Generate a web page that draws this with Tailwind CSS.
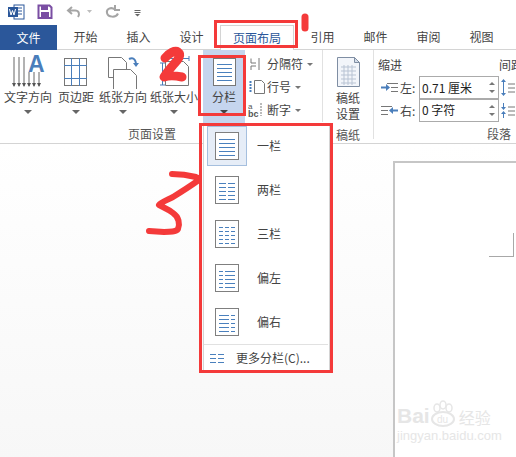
<!DOCTYPE html>
<html lang="zh">
<head>
<meta charset="utf-8">
<script src="https://cdn.jsdelivr.net/npm/@tailwindcss/browser@4"></script>
</head>
<body class="m-0 bg-white">
<div class="relative w-[516px] h-[457px] overflow-hidden flex flex-col text-[12px] leading-[16px] text-[#444] font-['Noto_Sans_CJK_SC','Microsoft_YaHei',sans-serif]">

  <!-- Title bar -->
  <div class="h-[25px] flex items-center shrink-0 relative">
    <svg class="absolute left-0 top-0" width="150" height="25" viewBox="0 0 150 25">
      <rect x="14" y="5" width="10" height="14" fill="#fff" stroke="#2b579a"/>
      <path d="M17 8h5M17 11h5M17 14h5" stroke="#2b579a"/>
      <rect x="8" y="7" width="10" height="10" fill="#2b579a"/>
      <path d="M9.500 9l1.500 6 1.500-4.500 1.500 4.500 1.500-6" stroke="#fff" stroke-width="1" fill="none"/>
      <path d="M38.500 5.500h11l2 2v10.500h-13z" fill="#fff" stroke="#7a4ea3" stroke-width="2"/>
      <rect x="41" y="6" width="7" height="4" fill="#7a4ea3"/>
      <rect x="41" y="12" width="8" height="6" fill="#7a4ea3"/>
      <path d="M72 7l-4 3.500 4 3.500M68.500 10.500h6.500c4 0 5 3.500 3 6.500" stroke="#a5a5a5" stroke-width="2" fill="none"/>
      <path d="M87 10h5l-2.500 3z" fill="#bdbdbd"/>
      <path d="M115 9.500c-4-3-9-.5-8 3.500 1 4.500 9 5 11 .5M115 5v5h5" stroke="#a5a5a5" stroke-width="2" fill="none"/>
      <path d="M134.500 10.500h6M134.500 12.500h6" stroke="#666"/>
      <path d="M135 14h5l-2.500 2.500z" fill="#666"/>
    </svg>
  </div>

  <!-- Tabs -->
  <div class="h-[25px] flex items-stretch shrink-0 border-b border-[#d4d4d4]">
    <div class="w-[57px] h-[25px] bg-[#2b579a] text-white flex items-center justify-center">文件</div>
    <div class="w-[53px] ml-[2px] flex items-center justify-center">开始</div>
    <div class="w-[53px] flex items-center justify-center">插入</div>
    <div class="w-[53px] flex items-center justify-center">设计</div>
    <div class="w-[74px] ml-[2px] h-[25px] bg-white border border-b-0 border-[#d4d4d4] text-[#2b579a] flex items-center justify-center whitespace-nowrap">页面布局</div>
    <div class="w-[53px] ml-[2px] flex items-center justify-center">引用</div>
    <div class="w-[53px] flex items-center justify-center">邮件</div>
    <div class="w-[53px] flex items-center justify-center">审阅</div>
    <div class="w-[53px] flex items-center justify-center">视图</div>
  </div>

  <!-- Ribbon -->
  <div class="h-[94px] flex shrink-0 border-b border-[#d4d4d4] bg-white">
    <!-- 页面设置 -->
    <div class="w-[323px] flex flex-col border-r border-[#e1e1e1] mb-[21px] relative">
      <div class="flex h-[73px] pl-[4px]">
        <div class="w-[48px] flex flex-col items-center">
          <svg class="shrink-0" width="48" height="39" viewBox="0 0 48 39">
            <path d="M10 7v29M15 7v29M20 7v29M25 22v14M30 22v14M35 22v14" stroke="#666" fill="none"/>
            <path d="M8 33l2 4 2-4zM13 33l2 4 2-4zM18 33l2 4 2-4zM23 33l2 4 2-4zM28 33l2 4 2-4zM33 33l2 4 2-4z" fill="#555"/>
            <text x="24" y="22" font-family="Liberation Sans" font-weight="700" font-size="23" fill="#4a7ebb">A</text>
          </svg>
          <span class="whitespace-nowrap">文字方向</span>
          <span class="mt-[5px] w-0 h-0 border-x-[4px] border-x-transparent border-t-[4px] border-t-[#666]"></span>
        </div>
        <div class="w-[48px] flex flex-col items-center">
          <svg class="shrink-0" width="48" height="39" viewBox="0 0 48 39">
            <rect x="12.500" y="8.500" width="22" height="27" fill="#fff" stroke="#777"/>
            <path d="M19.500 8v28M27.500 8v28M12 15.500h23M12 28.500h23" stroke="#4a7ebb" fill="none"/>
          </svg>
          <span class="whitespace-nowrap">页边距</span>
          <span class="mt-[5px] w-0 h-0 border-x-[4px] border-x-transparent border-t-[4px] border-t-[#666]"></span>
        </div>
        <div class="w-[46px] flex flex-col items-center">
          <svg class="shrink-0" width="46" height="39" viewBox="0 0 46 39">
            <path d="M8.500 7.500h13l5 5v15h-18z" fill="#fff" stroke="#777"/>
            <path d="M13.500 20.500h17l6 6v19h-23z" fill="#fff" stroke="#777" transform="translate(0 -1)"/>
            <path d="M29 9c4-2 6 0 7 4" stroke="#4a7ebb" stroke-width="2" fill="none"/>
            <path d="M33 13h6l-3 4z" fill="#4a7ebb"/>
          </svg>
          <span class="whitespace-nowrap">纸张方向</span>
          <span class="mt-[5px] w-0 h-0 border-x-[4px] border-x-transparent border-t-[4px] border-t-[#666]"></span>
        </div>
        <div class="w-[56px] flex flex-col items-center">
          <svg class="shrink-0" width="56" height="39" viewBox="0 0 56 39">
            <path d="M19.500 11.500h18l5 5v19h-23z" fill="#fff" stroke="#777"/>
            <path d="M21 8.500h22M21 6v5M43 6v5M16.500 13v22M14 13h5M14 35h5" stroke="#4a7ebb" fill="none"/>
          </svg>
          <span class="whitespace-nowrap">纸张大小</span>
          <span class="mt-[5px] w-0 h-0 border-x-[4px] border-x-transparent border-t-[4px] border-t-[#666]"></span>
        </div>
        <div class="w-[42px] ml-[1px] h-[73px] bg-[#c5d5ee] flex flex-col items-center">
          <svg class="shrink-0" width="42" height="39" viewBox="0 0 42 39">
            <rect x="10.500" y="8.500" width="22" height="27" fill="#fff" stroke="#777"/>
            <path d="M14 14.500h15M14 18.500h15M14 22.500h15M14 26.500h15M14 30.500h15" stroke="#4a80bd"/>
          </svg>
          <span class="whitespace-nowrap">分栏</span>
          <span class="mt-[5px] w-0 h-0 border-x-[4px] border-x-transparent border-t-[4px] border-t-[#444]"></span>
        </div>
        <div class="ml-[3px] flex flex-col pt-[6px] gap-[7px]">
          <div class="flex items-center h-[16px]">
            <svg width="19" height="16" viewBox="0 0 19 16"><path d="M3 2.500v4.500h5M3 14v-4h5M11 2v12" stroke="#777" fill="none"/></svg>
            <span>分隔符</span>
            <span class="ml-[4px] w-0 h-0 border-x-[3px] border-x-transparent border-t-[3px] border-t-[#777]"></span>
          </div>
          <div class="flex items-center h-[16px]">
            <svg width="19" height="16" viewBox="0 0 19 16"><path d="M6.500 1.500h7l3 3v10h-10z" fill="#fff" stroke="#777"/><path d="M2.500 2v12" stroke="#4a7ebb" stroke-dasharray="2 1" stroke-width="2"/></svg>
            <span>行号</span>
            <span class="ml-[4px] w-0 h-0 border-x-[3px] border-x-transparent border-t-[3px] border-t-[#777]"></span>
          </div>
          <div class="flex items-center h-[16px]">
            <svg width="19" height="16" viewBox="0 0 19 16"><text font-family="Liberation Sans" font-size="8" fill="#555"><tspan x="0" y="7">a</tspan><tspan x="0" y="15" font-weight="700" font-size="9">bc</tspan></text><path d="M13 1v13" stroke="#777" stroke-dasharray="2 1"/></svg>
            <span>断字</span>
            <span class="ml-[4px] w-0 h-0 border-x-[3px] border-x-transparent border-t-[3px] border-t-[#777]"></span>
          </div>
        </div>
      </div>
      <div class="absolute left-0 w-[304px] top-[76px] text-center text-[#555]">页面设置</div>
    </div>
    <!-- 稿纸 -->
    <div class="w-[51px] flex flex-col items-center border-r border-[#e1e1e1] mb-[4px] pt-[6px]">
      <svg class="shrink-0" width="26" height="32" viewBox="0 0 26 32">
        <path d="M2.500 1.500h17l5 5v24h-22z" fill="#f2f5fa" stroke="#7f8ea3"/>
        <path d="M19.500 1.500l5 5h-5z" fill="#d5dde9" stroke="#7f8ea3"/>
        <path d="M6 11h15M6 15h15M6 19h15M6 23h15M6 27h15M9 9v20M13 9v20M17 9v20" stroke="#b8c3d3" fill="none"/>
      </svg>
      <span class="mt-[2px]">稿纸</span>
      <span>设置</span>
      <span class="mt-[5px] text-[#555]">稿纸</span>
    </div>
    <!-- 段落 -->
    <div class="flex-1 pl-[4px] pt-[6px] relative overflow-hidden">
      <div class="flex h-[16px] mt-[1px] w-[160px]"><span class="shrink-0 whitespace-nowrap">缩进</span><span class="shrink-0 ml-[97px] whitespace-nowrap">间距</span></div>
      <div class="flex items-center mt-[3px] h-[23px] pl-[3px]">
        <svg class="shrink-0" width="18" height="23" viewBox="0 0 18 23"><path d="M6 7.500h11M10 11.500h7M10 15.500h7" stroke="#777"/><path d="M0 11.500h6" stroke="#4a7ebb" stroke-width="2"/><path d="M5 8l4 3.500-4 3.500z" fill="#4a7ebb"/></svg>
        <span class="ml-[1px] w-[19px] shrink-0">左:</span>
        <div class="shrink-0 w-[80px] h-[24px] border border-[#ababab] flex items-center justify-between pl-[2px] pr-[3px] text-[#222] whitespace-nowrap">
          <span>0.71 厘米</span>
          <span class="flex flex-col gap-[5px]"><span class="block w-0 h-0 border-x-[3px] border-x-transparent border-b-[3px] border-b-[#777]"></span><span class="block w-0 h-0 border-x-[3px] border-x-transparent border-t-[3px] border-t-[#777]"></span></span>
        </div>
        <svg class="ml-[2px] shrink-0" width="14" height="23" viewBox="0 0 14 23"><path d="M2.500 4v15" stroke="#4a7ebb"/><path d="M0 6l2.500-3 2.500 3zM0 17l2.500 3 2.500-3z" fill="#4a7ebb"/><path d="M7 8h7M7 12h7M7 16h7" stroke="#777"/></svg>
      </div>
      <div class="flex items-center h-[23px] pl-[3px]">
        <svg class="shrink-0" width="18" height="23" viewBox="0 0 18 23"><path d="M0 7.500h11M0 11.500h7M0 15.500h7" stroke="#777"/><path d="M11 11.500h6" stroke="#4a7ebb" stroke-width="2"/><path d="M12 8l-4 3.500 4 3.500z" fill="#4a7ebb"/></svg>
        <span class="ml-[1px] w-[19px] shrink-0">右:</span>
        <div class="shrink-0 w-[80px] h-[24px] -mt-[1px] border border-[#ababab] flex items-center justify-between pl-[2px] pr-[3px] text-[#222] whitespace-nowrap">
          <span>0 字符</span>
          <span class="flex flex-col gap-[5px]"><span class="block w-0 h-0 border-x-[3px] border-x-transparent border-b-[3px] border-b-[#777]"></span><span class="block w-0 h-0 border-x-[3px] border-x-transparent border-t-[3px] border-t-[#777]"></span></span>
        </div>
        <svg class="ml-[2px] shrink-0" width="14" height="23" viewBox="0 0 14 23"><path d="M2.500 4v5M2.500 14v5" stroke="#4a7ebb"/><path d="M0 8l2.500 3 2.500-3zM0 15l2.500-3 2.500 3z" fill="#4a7ebb"/><path d="M7 8h7M7 12h7M7 16h7" stroke="#777"/></svg>
      </div>
      <div class="text-right pr-[5px] mt-[4px] text-[#555]">段落</div>
    </div>
  </div>

  <!-- Document area -->
  <div class="flex-1 pl-[393px] pt-[17px] bg-gradient-to-b from-white to-[#f7f7f7]">
    <div class="relative w-[140px] h-[300px] bg-white border-l-2 border-t-2 border-[#c6c6c6]">
      <div class="absolute left-[94px] top-[70px] w-[25px] h-[24px] border-r border-b border-[#a8a8a8]"></div>
      <div class="absolute left-[2px] top-[237px] w-[100px] text-[#e6e6e6] font-['Liberation_Sans',sans-serif]">
        <div class="flex items-end">
          <span class="text-[21px] leading-[24px] font-bold">Bai</span>
          <svg class="shrink-0" width="26" height="28" viewBox="0 0 26 28"><ellipse cx="13" cy="19" rx="11" ry="7" fill="#fff" stroke="#e6e6e6" stroke-width="2"/><ellipse cx="7" cy="8" rx="3" ry="4" fill="none" stroke="#e6e6e6" stroke-width="1.500"/><ellipse cx="13" cy="5" rx="3" ry="4" fill="none" stroke="#e6e6e6" stroke-width="1.500"/><ellipse cx="19" cy="8" rx="3" ry="4" fill="none" stroke="#e6e6e6" stroke-width="1.500"/><text x="7" y="23" font-size="10" font-family="Liberation Sans" fill="#e6e6e6">du</text></svg>
          <span class="text-[16px] leading-[22px] ml-[3px] whitespace-nowrap font-['Noto_Sans_CJK_SC',sans-serif]">经验</span>
        </div>
        <div class="text-[13px] leading-[14px] mt-[1px] whitespace-nowrap">jingyan.baidu.com</div>
      </div>
    </div>
  </div>

  <!-- Dropdown menu -->
  <div class="absolute left-[203px] top-[123px] w-[127px] h-[248px] bg-white border border-[#d4d4d4] flex flex-col pl-[3px]">
    <div class="w-[120px] flex flex-col">
      <div class="h-[44px] flex items-center">
        <div class="w-[40px] h-[40px] flex items-center justify-center bg-[#e6edf7] border border-[#a5bfde]">
          <svg width="24" height="28" viewBox="0 0 24 28"><rect x=".5" y=".5" width="23" height="27" fill="#fff" stroke="#7f7f7f"/><path d="M4 7.500h16M4 11.500h16M4 15.500h16M4 19.500h16M4 23.500h16" stroke="#4a80bd"/></svg>
        </div>
        <span class="ml-[10px]">一栏</span>
      </div>
      <div class="h-[44px] flex items-center pl-[8px]">
        <svg width="24" height="28" viewBox="0 0 24 28"><rect x=".5" y=".5" width="23" height="27" fill="#fff" stroke="#7f7f7f"/><path d="M4 7.500h7M4 11.500h7M4 15.500h7M4 19.500h7M4 23.500h7M13 7.500h7M13 11.500h7M13 15.500h7M13 19.500h7M13 23.500h7" stroke="#4a80bd"/></svg>
        <span class="ml-[18px]">两栏</span>
      </div>
      <div class="h-[44px] flex items-center pl-[8px]">
        <svg width="24" height="28" viewBox="0 0 24 28"><rect x=".5" y=".5" width="23" height="27" fill="#fff" stroke="#7f7f7f"/><path d="M4 7.500h4M4 11.500h4M4 15.500h4M4 19.500h4M4 23.500h4M10 7.500h4M10 11.500h4M10 15.500h4M10 19.500h4M10 23.500h4M16 7.500h4M16 11.500h4M16 15.500h4M16 19.500h4M16 23.500h4" stroke="#4a80bd"/></svg>
        <span class="ml-[18px]">三栏</span>
      </div>
      <div class="h-[44px] flex items-center pl-[8px]">
        <svg width="24" height="28" viewBox="0 0 24 28"><rect x=".5" y=".5" width="23" height="27" fill="#fff" stroke="#7f7f7f"/><path d="M4 7.500h4M4 11.500h4M4 15.500h4M4 19.500h4M4 23.500h4M10 7.500h10M10 11.500h10M10 15.500h10M10 19.500h10M10 23.500h10" stroke="#4a80bd"/></svg>
        <span class="ml-[18px]">偏左</span>
      </div>
      <div class="h-[44px] flex items-center pl-[8px]">
        <svg width="24" height="28" viewBox="0 0 24 28"><rect x=".5" y=".5" width="23" height="27" fill="#fff" stroke="#7f7f7f"/><path d="M4 7.500h10M4 11.500h10M4 15.500h10M4 19.500h10M4 23.500h10M16 7.500h4M16 11.500h4M16 15.500h4M16 19.500h4M16 23.500h4" stroke="#4a80bd"/></svg>
        <span class="ml-[18px]">偏右</span>
      </div>
      <div class="h-[1px] bg-[#e1e1e1] w-[124px] -ml-[3px]"></div>
      <div class="h-[26px] flex items-center pl-[3px]">
        <svg class="shrink-0" width="14" height="13" viewBox="0 0 14 13"><path d="M0 2.500h6M0 6.500h6M0 10.500h6M8 2.500h6M8 6.500h6M8 10.500h6" stroke="#4a80bd"/></svg>
        <span class="ml-[12px] whitespace-nowrap">更多分栏(C)...</span>
      </div>
    </div>
  </div>

  <!-- Hand-drawn red annotations -->
  <div class="absolute left-[214px] top-[20px] w-[84px] h-[28px] border-[3px] border-[#f43a3a]"></div>
  <div class="absolute left-[198px] top-[55px] w-[48px] h-[61px] border-[3px] border-[#f43a3a]"></div>
  <div class="absolute left-[199px] top-[123px] w-[134px] h-[250px] border-[3px] border-[#f43a3a]"></div>
  <svg class="absolute left-0 top-0 pointer-events-none" width="516" height="457" viewBox="0 0 516 457">
    <path d="M305 17v11" stroke="#f43a3a" stroke-width="7" stroke-linecap="round"/>
    <path d="M165 58c4-5 10-8 13-6 4 3 0 8-4 12-4 5-7 8-10 13 6-2 13-1 18 0" fill="none" stroke="#f43a3a" stroke-width="9" stroke-linecap="round" stroke-linejoin="round"/>
    <path d="M172 174c8 0 16 1 24 3 3 1 3 3 0 5-7 5-15 10-23 15-6 3-12 5-14 8 3 2 9 4 14 8 6 4 7 11 5 16-2 3-8 3-14 3l-15-1" fill="none" stroke="#f43a3a" stroke-width="6" stroke-linecap="round" stroke-linejoin="round"/>
  </svg>
</div>
</body>
</html>
